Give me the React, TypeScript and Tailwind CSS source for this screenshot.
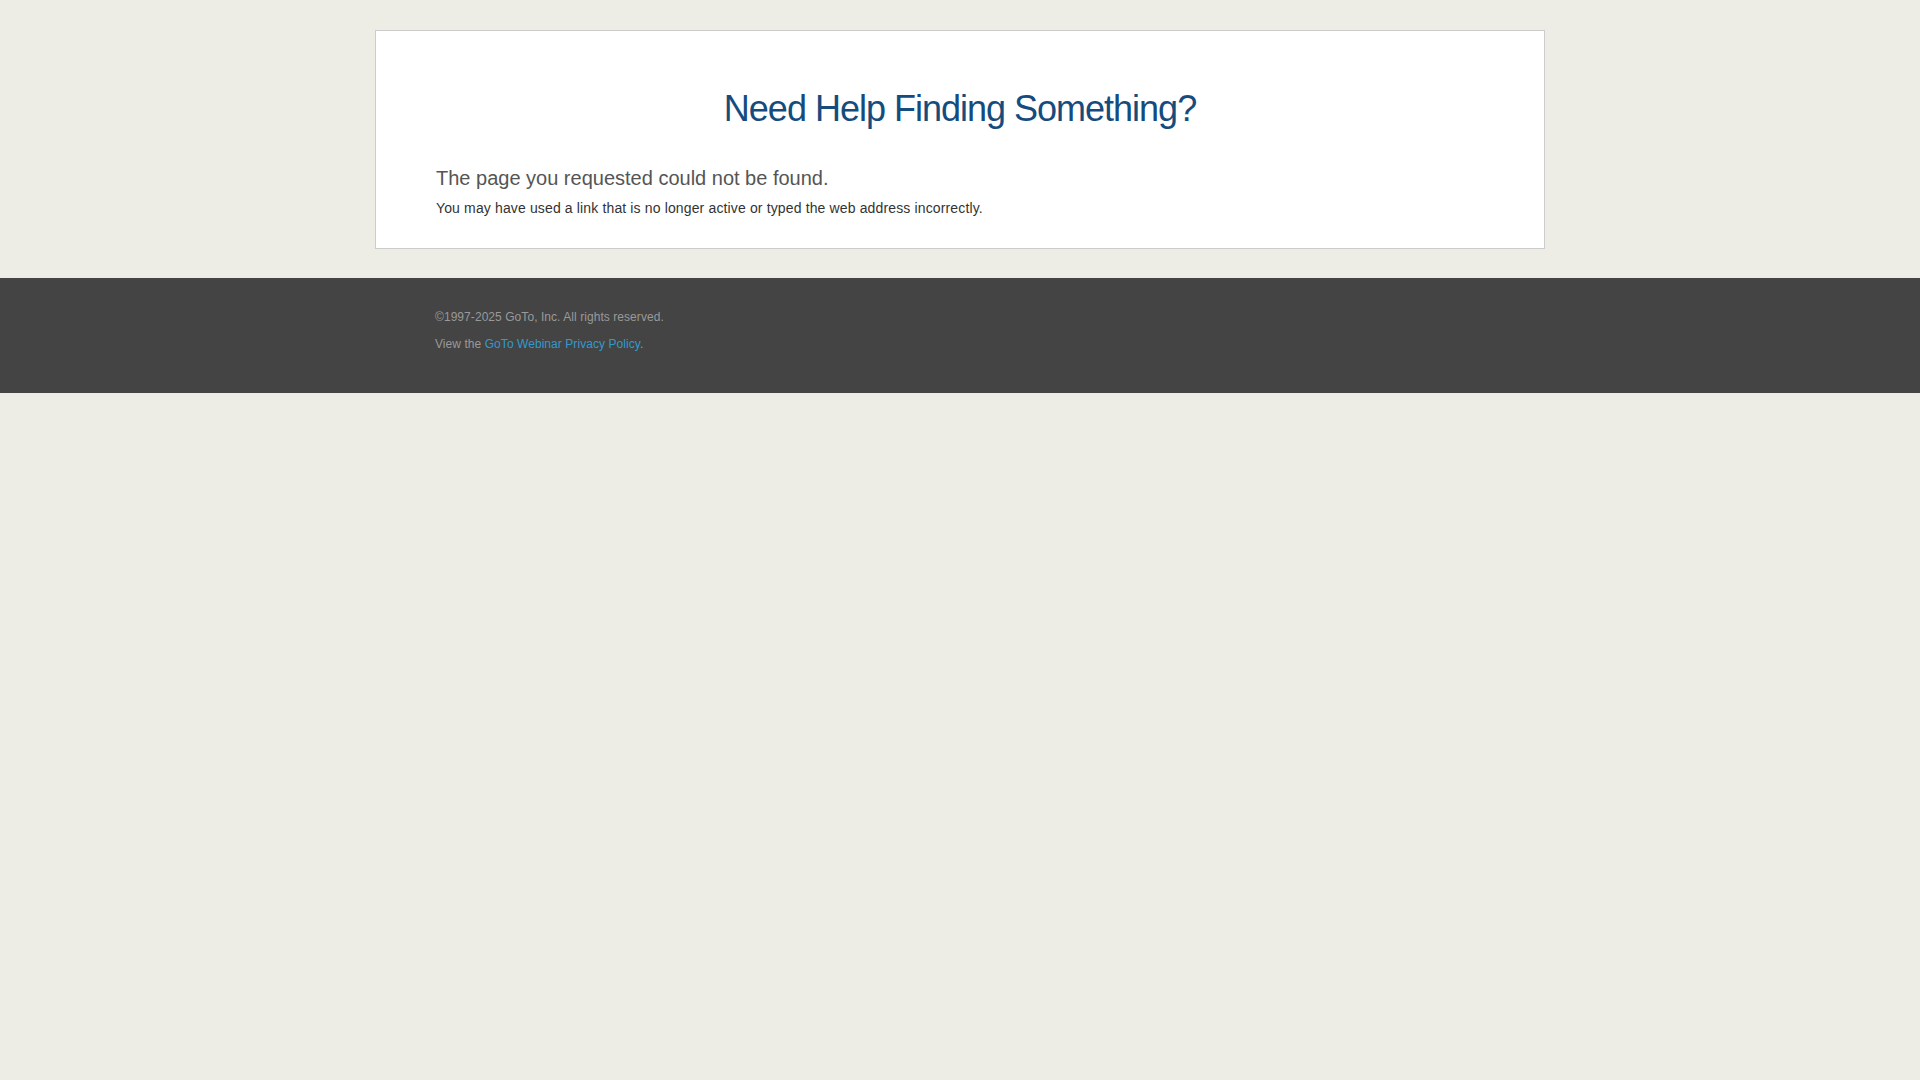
export default function App() {
    return (
        <div className="min-h-screen bg-[#edece5] pt-[30px] font-['Liberation_Sans',Arial,sans-serif]">
            {/* Not found card */}
            <div className="mx-auto w-[1170px] border border-[#cccccc] bg-white px-[60px] pt-[58px] pb-[30px]">
                <h1 className="text-center text-[36px] leading-[40px] font-normal text-[#154c7d] tracking-[-1px]">
                    Need Help Finding Something?
                </h1>
                <h2 className="mt-[37px] text-[20px] leading-[24px] text-[#555555]">
                    The page you requested could not be found.
                </h2>
                <p className="mt-[8px] text-[14px] leading-[20px] tracking-[0.14px] text-[#333333]">
                    You may have used a link that is no longer active or typed the web address incorrectly.
                </p>
            </div>

            {/* Footer */}
            <div className="mt-[29px] bg-[#444444]">
                <div className="mx-auto w-[1170px] px-[60px] pt-[31px] pb-[41px] text-[12px] leading-[16px] tracking-[0.06px] text-[#999999]">
                    <p>©1997-2025 GoTo, Inc. All rights reserved.</p>
                    <p className="mt-[11px]">
                        View the <a href="#" className="text-[#3399cc]">GoTo Webinar Privacy Policy</a>.
                    </p>
                </div>
            </div>
        </div>
    );
}
